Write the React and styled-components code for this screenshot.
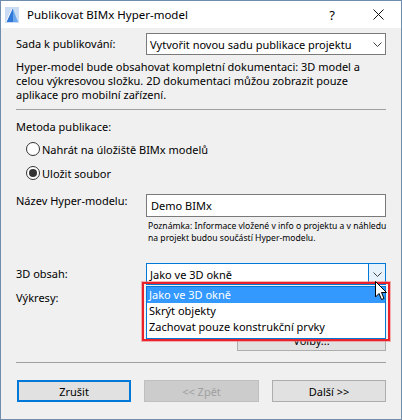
import React from 'react';
import styled, { createGlobalStyle } from 'styled-components';

const GlobalStyle = createGlobalStyle`
  html, body { margin: 0; padding: 0; background: #ffffff; }
  body { font-family: "Noto Sans", "Liberation Sans", sans-serif; font-size: 11px; color: #000; }
  * { box-sizing: border-box; }
`;

const Window = styled.div`
  position: relative;
  width: 402px;
  height: 420px;
  border: 1px solid #6f8eae;
  background: #f0f0f0;
  display: flex;
  flex-direction: column;
  overflow: hidden;
`;

const TitleBar = styled.div`
  height: 27px;
  background: #ffffff;
  display: flex;
  align-items: center;
  padding-left: 4px;
  flex-shrink: 0;
`;

const Title = styled.div`
  margin-left: 8px;
  font-size: 11.5px;
  flex: 1;
`;

const TitleButton = styled.div`
  width: 46px;
  height: 27px;
  display: flex;
  align-items: center;
  justify-content: center;
  font-size: 13px;
`;

const Body = styled.div`
  padding: 5px 15px 0 15px;
  display: flex;
  flex-direction: column;
`;

const FieldRow = styled.div`
  display: grid;
  grid-template-columns: 130px 240px;
  align-items: ${(p) => p.$align || 'center'};
  margin-top: ${(p) => p.$mt || 0}px;
`;

const Label = styled.div`
  line-height: 14px;
`;

const SelectBox = styled.div`
  position: relative;
  width: 100%;
  height: 22px;
  background: #fff;
  border: 1px solid ${(p) => (p.$focus ? '#0078d7' : '#7a7a7a')};
  display: flex;
  align-items: center;
  padding-left: 3px;
`;

const DropButton = styled.div`
  position: absolute;
  top: -1px;
  right: -1px;
  bottom: -1px;
  width: 18px;
  display: flex;
  align-items: center;
  justify-content: center;
  background: ${(p) => (p.$focus ? '#e5f1fb' : 'transparent')};
  border: 1px solid ${(p) => (p.$focus ? '#0078d7' : 'transparent')};
`;

const TextInput = styled.div`
  height: 23px;
  background: #fff;
  border: 1px solid #7a7a7a;
  display: flex;
  align-items: center;
  padding-left: 4px;
`;

const Paragraph = styled.div`
  margin-top: 5px;
  line-height: 14px;
`;

const Separator = styled.div`
  height: 1px;
  background: #a0a0a0;
  margin-top: ${(p) => p.$mt}px;
`;

const SectionLabel = styled.div`
  margin-top: ${(p) => p.$mt}px;
  line-height: 14px;
`;

const RadioRow = styled.div`
  display: flex;
  align-items: center;
  gap: 2px;
  height: 16px;
  padding-left: 10px;
  margin-top: ${(p) => p.$mt}px;
`;

const RadioCircle = styled.span`
  width: 14px;
  height: 14px;
  border-radius: 50%;
  border: 1px solid #333;
  background: #fff;
  display: flex;
  align-items: center;
  justify-content: center;
  &::after {
    content: '';
    width: 8px;
    height: 8px;
    border-radius: 50%;
    background: ${(p) => (p.$checked ? '#333' : 'transparent')};
  }
`;

const Note = styled.div`
  grid-column: 2;
  font-size: 8.6px;
  line-height: 12px;
  padding-left: 2px;
  margin-top: 3px;
  white-space: nowrap;
`;

const FieldStack = styled.div`
  display: flex;
  flex-direction: column;
  align-items: flex-end;
  gap: 16px;
`;

const Button = styled.div`
  height: 22px;
  width: ${(p) => p.$w || 114}px;
  display: flex;
  align-items: center;
  justify-content: center;
  background: ${(p) => (p.$disabled ? '#cccccc' : '#e1e1e1')};
  border: ${(p) => (p.$default ? '2px solid #0078d7' : p.$disabled ? '1px solid #bfbfbf' : '1px solid #adadad')};
  color: ${(p) => (p.$disabled ? '#a0a0a0' : '#000')};
`;

const ButtonBar = styled.div`
  display: flex;
  justify-content: space-between;
  margin-top: 17px;
  padding-left: 1px;
`;

const DropList = styled.div`
  position: absolute;
  left: 145px;
  top: 285px;
  width: 240px;
  background: #fff;
  border: 1px solid #0078d7;
  padding: 0 0 3px 0;
`;

const ListItem = styled.div`
  height: 16px;
  line-height: 16px;
  padding-left: 2px;
  background: ${(p) => (p.$active ? '#3399ff' : 'transparent')};
  color: ${(p) => (p.$active ? '#fff' : '#000')};
`;

const Highlight = styled.div`
  position: absolute;
  left: 141px;
  top: 281px;
  width: 248px;
  height: 59px;
  border: 2px solid #e8212b;
  box-shadow: 0 0 0 1px rgba(240, 120, 120, 0.55);
  pointer-events: none;
`;

const Cursor = styled.svg`
  position: absolute;
  left: 374px;
  top: 280px;
`;

const Chevron = () => (
  <svg width="9" height="5" viewBox="0 0 9 5">
    <path d="M0.5 0.5 L4.5 4.5 L8.5 0.5" fill="none" stroke="#444" strokeWidth="1" />
  </svg>
);

const AppIcon = () => (
  <svg width="14" height="16" viewBox="0 0 14 16">
    <rect x="0" y="0" width="14" height="16" fill="#c9dcf2" />
    <path d="M1 15 L7 2 L8 2 L8 15 Z" fill="#2f78d8" />
    <path d="M8 2 L13 15 L8 15 Z" fill="#6aa6ee" />
    <path d="M1 15 L7 2" stroke="#ffffff" strokeWidth="1" />
  </svg>
);

export default function App() {
  return (
    <>
      <GlobalStyle />
      <Window>
        <TitleBar>
          <AppIcon />
          <Title>Publikovat BIMx Hyper-model</Title>
          <TitleButton>?</TitleButton>
          <TitleButton>
            <svg width="11" height="11" viewBox="0 0 11 11">
              <path d="M0.5 0.5 L10.5 10.5 M10.5 0.5 L0.5 10.5" stroke="#111" strokeWidth="1" />
            </svg>
          </TitleButton>
        </TitleBar>
        <Body>
          <FieldRow>
            <Label>Sada k publikování:</Label>
            <SelectBox>
              Vytvořit novou sadu publikace projektu
              <DropButton><Chevron /></DropButton>
            </SelectBox>
          </FieldRow>
          <Paragraph>
            Hyper-model bude obsahovat kompletní dokumentaci: 3D model a<br />
            celou výkresovou složku. 2D dokumentaci můžou zobrazit pouze<br />
            aplikace pro mobilní zařízení.
          </Paragraph>
          <Separator $mt={7} />
          <SectionLabel $mt={10}>Metoda publikace:</SectionLabel>
          <RadioRow $mt={7}>
            <RadioCircle />
            Nahrát na úložiště BIMx modelů
          </RadioRow>
          <RadioRow $mt={8}>
            <RadioCircle $checked />
            Uložit soubor
          </RadioRow>
          <FieldRow $align="start" $mt={13}>
            <Label>Název Hyper-modelu:</Label>
            <TextInput>Demo BIMx</TextInput>
            <Note>
              Poznámka: Informace vložené v info o projektu a v náhledu<br />
              na projekt budou součástí Hyper-modelu.
            </Note>
          </FieldRow>
          <FieldRow $mt={19}>
            <Label>3D obsah:</Label>
            <SelectBox $focus>
              Jako ve 3D okně
              <DropButton $focus><Chevron /></DropButton>
            </SelectBox>
          </FieldRow>
          <FieldRow $align="start" $mt={6}>
            <Label>Výkresy:</Label>
            <FieldStack>
              <SelectBox>
                <DropButton><Chevron /></DropButton>
              </SelectBox>
              <Button $w={149}>Volby...</Button>
            </FieldStack>
          </FieldRow>
          <Separator $mt={11} />
          <ButtonBar>
            <Button $default $w={114}>Zrušit</Button>
            <Button $disabled $w={115}>&lt;&lt; Zpět</Button>
            <Button $w={114}>Další &gt;&gt;</Button>
          </ButtonBar>
        </Body>

        <DropList>
          <ListItem $active>Jako ve 3D okně</ListItem>
          <ListItem>Skrýt objekty</ListItem>
          <ListItem>Zachovat pouze konstrukční prvky</ListItem>
        </DropList>
        <Highlight />
        <Cursor width="13" height="20" viewBox="0 0 13 20">
          <path d="M0.5 0.5 L0.5 16 L4 12.5 L6.5 18.5 L9 17.5 L6.5 11.5 L11.5 11.5 Z" fill="#fff" stroke="#000" strokeWidth="1" strokeLinejoin="round" />
        </Cursor>
      </Window>
    </>
  );
}
